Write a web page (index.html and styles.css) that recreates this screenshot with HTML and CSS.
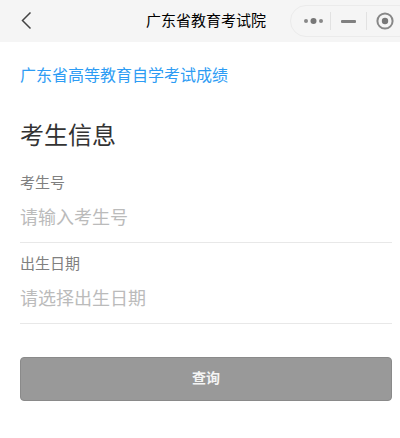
FILE: index.html
```html
<html>
    <head>
        <meta charset="utf-8">
        <title>广东省教育考试院</title>
        <link rel="stylesheet" href="styles.css">
    </head>
    <body>
        <div class="navbar">
            <svg class="nav-back" width="12" height="18" viewBox="0 0 12 18">
                <path d="M9.5 0.5 L1.5 8.5 L9.5 16.5" fill="none" stroke="#444" stroke-width="1.5"/>
            </svg>
            <div class="nav-title">广东省教育考试院</div>
            <div class="capsule">
                <svg class="capsule-more" width="22" height="8" viewBox="0 0 22 8">
                    <circle cx="3" cy="4" r="2" fill="#888"/>
                    <circle cx="10.5" cy="4" r="3" fill="#777"/>
                    <circle cx="18" cy="4" r="2" fill="#888"/>
                </svg>
                <span class="capsule-line"></span>
                <span class="capsule-min"></span>
                <span class="capsule-line"></span>
                <svg class="capsule-close" width="18" height="18" viewBox="0 0 18 18">
                    <circle cx="9" cy="9" r="7.6" fill="none" stroke="#888" stroke-width="2"/>
                    <circle cx="9" cy="9" r="3.2" fill="#777"/>
                </svg>
            </div>
        </div>

        <div class="content">
            <a class="exam-link">广东省高等教育自学考试成绩</a>
            <h2 class="section-title">考生信息</h2>

            <div class="field">
                <div class="field-label">考生号</div>
                <div class="field-input">请输入考生号</div>
            </div>
            <div class="field">
                <div class="field-label">出生日期</div>
                <div class="field-input">请选择出生日期</div>
            </div>

            <div class="btn-query">查询</div>
        </div>
    </body>
</html>
```

FILE: styles.css
```css
body {
    margin: 0px;
    padding: 0px;
    background: white;
    font-family: "Liberation Sans", "Noto Sans CJK SC", sans-serif;
}

.navbar {
    display: flex;
    align-items: center;
    height: 42px;
    background: #f5f5f5;
    padding-left: 21px;
    overflow: hidden;
}

.nav-back {
    flex: none;
}

.nav-title {
    width: 120px;
    margin-left: 113px;
    font-size: 15px;
    line-height: 42px;
    color: black;
    white-space: nowrap;
}

.capsule {
    flex: none;
    display: flex;
    align-items: center;
    width: 125px;
    height: 32px;
    margin-left: 24px;
    padding-left: 12px;
    box-sizing: border-box;
    border: 1px solid #ebebeb;
    border-radius: 16px;
}

.capsule-line {
    width: 1px;
    height: 18px;
    background: #e2e2e2;
}

.capsule-more {
    margin-right: 5px;
}

.capsule-min {
    width: 15px;
    height: 3px;
    margin: 0 10px;
    background: #808080;
    border-radius: 1px;
}

.capsule-close {
    margin-left: 9px;
}

.content {
    padding: 0 8px 0 20px;
}

.exam-link {
    display: block;
    margin-top: 23px;
    font-size: 16px;
    line-height: 22px;
    color: #2d9cf4;
}

.section-title {
    margin: 33px 0 10px 0;
    font-size: 24px;
    line-height: 32px;
    font-weight: normal;
    color: #333;
}

.field {
    border-bottom: 1px solid #e8e8e8;
}

.field-label {
    padding-top: 10px;
    font-size: 15px;
    line-height: 21px;
    color: #808080;
}

.field-input {
    padding-top: 12px;
    height: 49px;
    font-size: 18px;
    line-height: 26px;
    color: #bbb;
    box-sizing: border-box;
}

.btn-query {
    height: 44px;
    margin-top: 33px;
    background: #999;
    border: 1px solid #8a8a8a;
    border-radius: 4px;
    box-sizing: border-box;
    font-size: 14px;
    font-weight: bold;
    line-height: 40px;
    text-align: center;
    color: #f4f4f4;
}
```
